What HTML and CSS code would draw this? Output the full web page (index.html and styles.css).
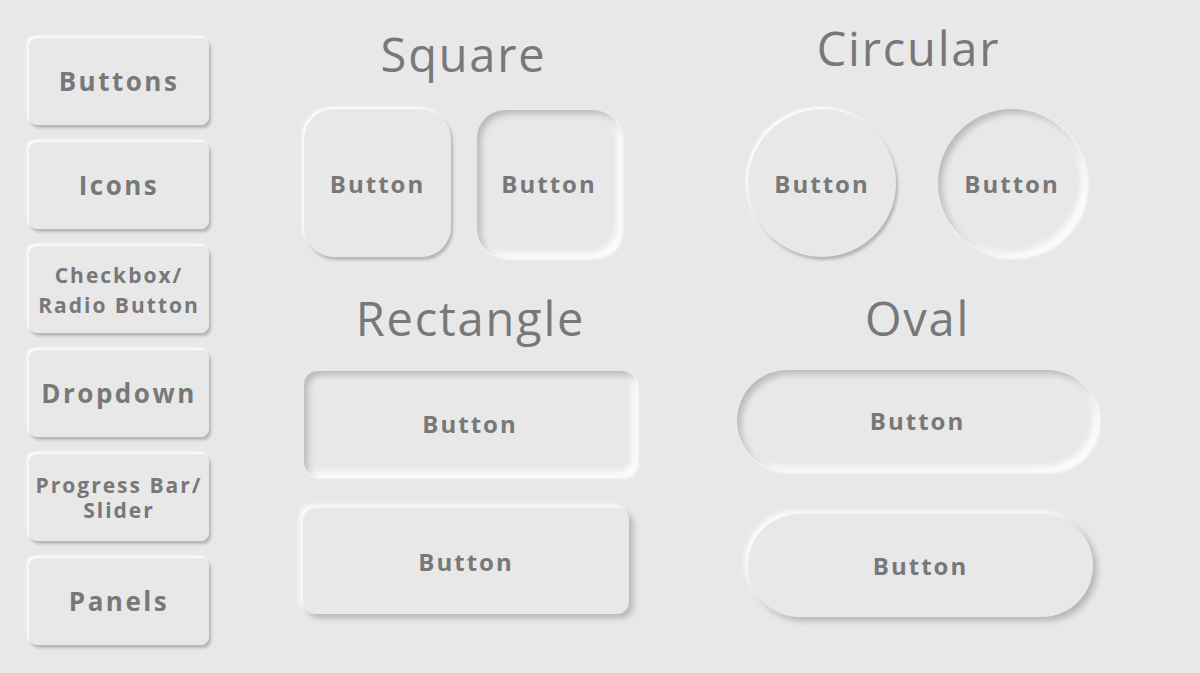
FILE: index.html
```html
<!DOCTYPE html>
<html lang="en">
<head>
    <meta charset="UTF-8">
    <meta name="viewport" content="width=device-width, initial-scale=1.0">
    <title>Neumorphic Buttons</title>
    <link rel="stylesheet" href="styles.css">
</head>
<body>
    <div class="page">
        <nav class="sidebar">
            <div class="nav-btn">Buttons</div>
            <div class="nav-btn">Icons</div>
            <div class="nav-btn small">Checkbox/<br>Radio Button</div>
            <div class="nav-btn">Dropdown</div>
            <div class="nav-btn small tight">Progress Bar/<br>Slider</div>
            <div class="nav-btn">Panels</div>
        </nav>

        <main class="main">
            <section class="section">
                <h2 class="title title-left">Square</h2>
                <div class="row square-row">
                    <div class="btn square raised">Button</div>
                    <div class="btn square inset">Button</div>
                </div>
            </section>

            <section class="section">
                <h2 class="title title-up">Circular</h2>
                <div class="row circle-row">
                    <div class="btn circle raised">Button</div>
                    <div class="btn circle inset">Button</div>
                </div>
            </section>

            <section class="section">
                <h2 class="title">Rectangle</h2>
                <div class="stack rect-stack">
                    <div class="btn rect inset">Button</div>
                    <div class="btn rect raised rect-raised">Button</div>
                </div>
            </section>

            <section class="section">
                <h2 class="title">Oval</h2>
                <div class="stack oval-stack">
                    <div class="btn oval inset">Button</div>
                    <div class="btn oval raised oval-raised">Button</div>
                </div>
            </section>
        </main>
    </div>
</body>
</html>
```

FILE: styles.css
```css
:root {
    --bg-color: #e8e8e8;
    --text-color: #787878;
    --dark-shadow: rgba(0, 0, 0, 0.22);
    --light-shadow: rgba(255, 255, 255, 0.95);
}

body {
    font-family: 'Open Sans', 'Noto Sans', sans-serif;
    background-color: var(--bg-color);
    color: var(--text-color);
    margin: 0;
    width: 1200px;
    height: 673px;
    overflow: hidden;
}

.page {
    display: flex;
    align-items: flex-start;
    padding: 24px 0 0 29px;
}

.sidebar {
    display: flex;
    flex-direction: column;
    gap: 17px;
    width: 180px;
    flex-shrink: 0;
    margin-top: 14px;
}

.nav-btn {
    height: 87px;
    display: flex;
    align-items: center;
    justify-content: center;
    text-align: center;
    border-radius: 8px;
    font-size: 26px;
    font-weight: 700;
    letter-spacing: 2.5px;
    line-height: 1.2;
    box-shadow: 2px 3px 3px var(--dark-shadow), -2px -2px 3px var(--light-shadow);
}

.nav-btn.small {
    font-size: 21px;
    letter-spacing: 2px;
    line-height: 30px;
}

.nav-btn.tight {
    line-height: 25px;
}

.main {
    display: grid;
    grid-template-columns: 333px 361px;
    column-gap: 100px;
    row-gap: 31px;
    margin-left: 95px;
}

.title {
    margin: 0 0 25px 0;
    height: 60px;
    line-height: 60px;
    font-size: 47px;
    font-weight: 500;
    letter-spacing: 1.8px;
    text-align: center;
}

.title-left {
    padding-right: 14px;
}

.title-up {
    margin-top: -6px;
    margin-bottom: 31px;
    padding-right: 18px;
}

.section:nth-child(3) .title,
.section:nth-child(4) .title {
    margin-bottom: 23px;
}

.row {
    display: flex;
    align-items: center;
}

.square-row {
    gap: 26px;
}

.circle-row {
    gap: 42px;
    padding-left: 11px;
}

.stack {
    display: flex;
    flex-direction: column;
}

.rect-stack {
    gap: 32px;
}

.oval-stack {
    gap: 43px;
    margin-top: -1px;
}

.btn {
    display: flex;
    align-items: center;
    justify-content: center;
    font-size: 24px;
    font-weight: 700;
    letter-spacing: 2px;
}

.raised {
    box-shadow: 2px 3px 3px var(--dark-shadow), -2px -2px 3px var(--light-shadow);
}

.inset {
    box-shadow: inset 4px 4px 6px rgba(0, 0, 0, 0.2), inset -4px -4px 6px var(--light-shadow),
        2px 2px 3px var(--light-shadow);
}

.square {
    width: 147px;
    height: 148px;
    border-radius: 30px;
}

.square.inset {
    width: 144px;
    height: 147px;
    border-radius: 28px;
}

.circle {
    width: 148px;
    height: 148px;
    border-radius: 50%;
}

.rect {
    width: 332px;
    height: 105px;
    border-radius: 14px;
}

.rect-raised {
    width: 326px;
    height: 106px;
    border-radius: 12px;
    margin-left: -1px;
    box-shadow: 4px 4px 6px var(--dark-shadow), -3px -3px 5px var(--light-shadow);
}

.oval {
    width: 361px;
    height: 101px;
    border-radius: 51px;
}

.oval-raised {
    width: 345px;
    height: 103px;
    margin-left: 11px;
    box-shadow: 4px 4px 6px var(--dark-shadow), -3px -3px 5px var(--light-shadow);
}
```
